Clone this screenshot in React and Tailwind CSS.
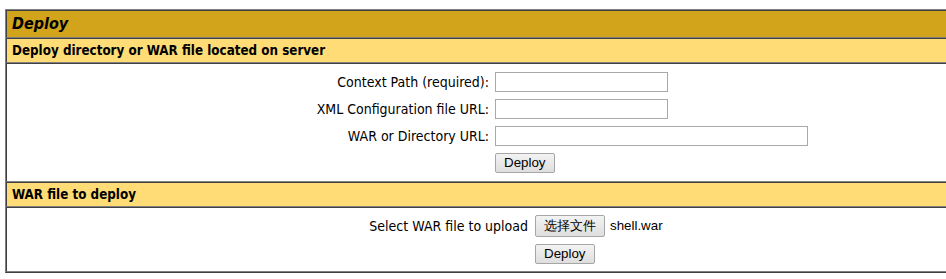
import React from "react";

const LABEL_FONT =
  "font-['DejaVu_Sans_Condensed','DejaVu_Sans',sans-serif] [font-stretch:condensed]";

const Button = ({ children, className = "" }) => (
  <button
    type="button"
    className={`h-[20px] px-[8px] rounded-[2px] border border-[#a6a6a6] bg-gradient-to-b from-[#f3f3f3] to-[#dedede] text-[13.33px] leading-none text-black font-['Liberation_Sans',Arial,sans-serif] ${className}`}
  >
    {children}
  </button>
);

const TextInput = ({ width }) => (
  <input
    type="text"
    className={`h-[20px] ${width} border border-[#a9a9a9] bg-white outline-none`}
  />
);

// one table cell row: inset border (dark top/left, light bottom)
const Cell = ({ className = "", children }) => (
  <div
    className={`border-t border-l border-b border-t-[#404040] border-l-[#404040] border-b-[#808080] ${className}`}
  >
    {children}
  </div>
);

const Label = ({ children, className = "pr-[3px]" }) => (
  <div
    className={`flex items-center justify-end h-[20px] leading-[20px] text-[14px] text-black ${LABEL_FONT} ${className}`}
  >
    {children}
  </div>
);

export default function App() {
  return (
    <div className="w-full overflow-hidden bg-white pt-[9px] pb-[6px]">
      <div className="ml-[5px] w-[1108px] border-t border-l border-b border-t-[#808080] border-l-[#808080] border-b-[#404040]">
        <Cell className="h-[28px] bg-[#D2A41C] flex items-center pl-[5px]">
          <span className={`text-[16px] leading-[20px] italic font-bold text-black ${LABEL_FONT}`}>
            Deploy
          </span>
        </Cell>
        <Cell className="h-[25px] bg-[#FFDC75] flex items-center pl-[5px]">
          <span className={`text-[13.3px] leading-[18px] font-bold text-black ${LABEL_FONT}`}>
            Deploy directory or WAR file located on server
          </span>
        </Cell>
        <Cell className="pt-[8px] pb-[8px] flex justify-center">
          <div className="grid grid-cols-[183px_319px] gap-y-[7px]">
            <Label>Context Path (required):</Label>
            <div className="pl-[3px] flex h-[20px]">
              <TextInput width="w-[173px]" />
            </div>
            <Label>XML Configuration file URL:</Label>
            <div className="pl-[3px] flex h-[20px]">
              <TextInput width="w-[173px]" />
            </div>
            <Label>WAR or Directory URL:</Label>
            <div className="pl-[3px] flex h-[20px]">
              <TextInput width="w-[313px]" />
            </div>
            <div />
            <div className="pl-[3px] flex h-[20px]">
              <Button>Deploy</Button>
            </div>
          </div>
        </Cell>
        <Cell className="h-[25px] bg-[#FFDC75] flex items-center pl-[5px]">
          <span className={`text-[13.3px] leading-[18px] font-bold text-black ${LABEL_FONT}`}>
            WAR file to deploy
          </span>
        </Cell>
        <Cell className="pt-[7px] pb-[7px] flex justify-center">
          <div className="grid grid-cols-[169px_225px] gap-y-[7px]">
            <div
              className={`flex items-center justify-end h-[22px] leading-[20px] pr-[4px] text-[14px] text-black ${LABEL_FONT}`}
            >
              Select WAR file to upload
            </div>
            <div className="pl-[3px] flex items-center gap-[5px] h-[22px]">
              <Button className="h-[22px] font-['Liberation_Sans','Noto_Sans_CJK_SC',sans-serif]">
                选择文件
              </Button>
              <span className="text-[13.33px] leading-[16px] text-black font-['Liberation_Sans',Arial,sans-serif]">
                shell.war
              </span>
            </div>
            <div />
            <div className="pl-[3px] flex h-[20px]">
              <Button>Deploy</Button>
            </div>
          </div>
        </Cell>
      </div>
    </div>
  );
}
